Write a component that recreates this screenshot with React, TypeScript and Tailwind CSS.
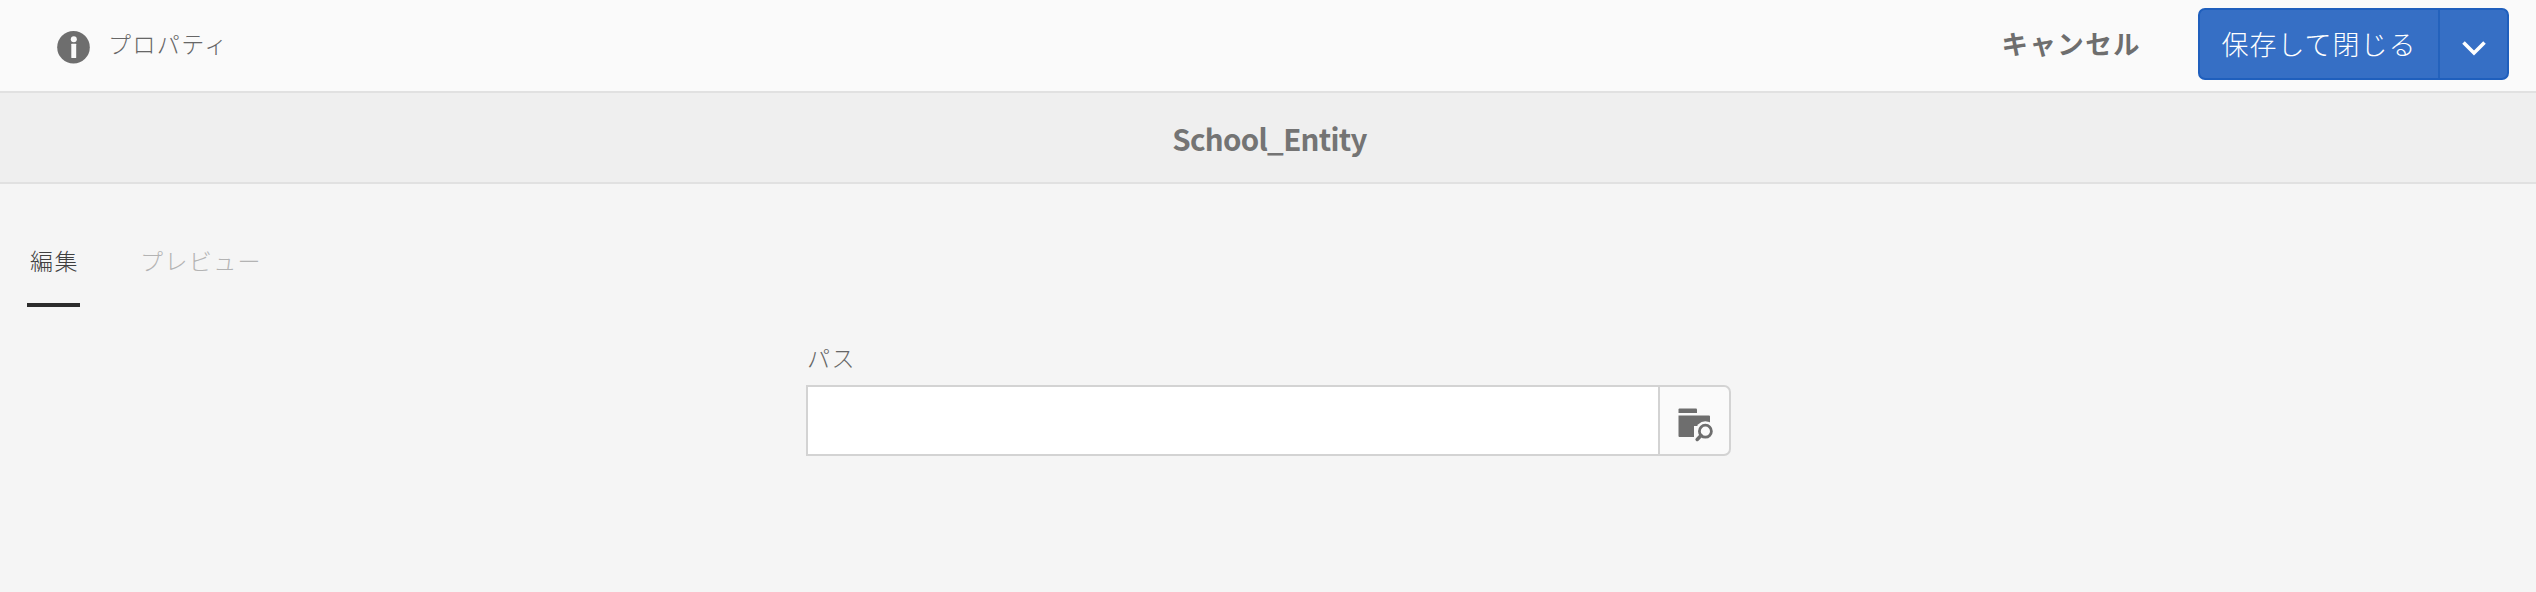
function InfoIcon() {
  return (
    <svg className="h-[33px] w-[33px] shrink-0" viewBox="0 0 33 33" aria-hidden="true">
      <circle cx="16.5" cy="16.3" r="16.3" fill="#6e6e6e" />
      <circle cx="16.8" cy="8.3" r="3" fill="#fafafa" />
      <rect x="14.3" y="12.8" width="4.9" height="14.2" rx="0.5" fill="#fafafa" />
    </svg>
  );
}

function ChevronIcon() {
  return (
    <svg className="h-[18px] w-[26px]" viewBox="0 0 26 18" fill="none" aria-hidden="true">
      <path d="M2.5 2.5 13 13 23.5 2.5" stroke="#ffffff" strokeWidth="3.6" />
    </svg>
  );
}

function FolderSearchIcon() {
  return (
    <svg className="h-[34px] w-[36px]" viewBox="0 0 36 34" aria-hidden="true">
      <path d="M.5 5V1.5Q.5 .5 1.5 .5H18Q19 .5 19 1.5V5Z" fill="#6e6e6e" />
      <path d="M.5 7.4H31Q32 7.4 32 8.4V18H16V29H1.5Q.5 29 .5 28Z" fill="#6e6e6e" />
      <circle cx="27.4" cy="23.2" r="10" fill="#fafafa" />
      <path d="M25 25.5 19.2 31.5" stroke="#fafafa" strokeWidth="6.5" />
      <circle cx="27.4" cy="23.2" r="6" fill="none" stroke="#6e6e6e" strokeWidth="2.8" />
      <path d="M23 27.6 19.2 31.4" stroke="#6e6e6e" strokeWidth="3.6" strokeLinecap="round" />
    </svg>
  );
}

export default function App() {
  return (
    <div className="h-[592px] w-full overflow-hidden bg-[#f5f5f5] font-['Noto_Sans_CJK_JP',sans-serif] font-light text-[#666666]">
      <header className="flex h-[93px] items-start justify-between border-b-2 border-[#e1e1e1] bg-[#fafafa] pr-[27px] pl-[57px]">
        <div className="flex pt-[31px]">
          <InfoIcon />
          <span className="-mt-[5px] ml-[18px] text-[23px] leading-[34px] tracking-[1.4px]">プロパティ</span>
        </div>
        <div className="flex pt-[8px]">
          <button className="mr-[57px] h-[71px] pb-[1px] text-[26.5px] leading-[70px] font-bold tracking-[1.4px] text-[#6e6e6e]">キャンセル</button>
          <div className="flex h-[72px] overflow-hidden rounded-[7px] border-2 border-[#1f5fbd] bg-[#366fc5] text-white">
            <button className="w-[240px] border-r-2 border-[#2462bc] pb-[1px] text-[27px] leading-[67px] tracking-[1px]">保存して閉じる</button>
            <button className="flex w-[67px] items-center justify-center pt-[9px]" aria-label="その他">
              <ChevronIcon />
            </button>
          </div>
        </div>
      </header>
      <div className="flex h-[91px] items-center justify-center border-b-2 border-[#e1e1e1] bg-[#efefef] pl-[3px]">
        <h1 className="text-[29.5px] leading-[40px] font-bold tracking-[-0.7px] text-[#747474]">School_Entity</h1>
      </div>
      <nav className="flex h-[123px] gap-[60px] pl-[27px]">
        <button className="flex h-[123px] w-[53px] justify-center border-b-4 border-[#2c2c2c] pt-[59px] text-[23px] leading-[34px] tracking-[1.4px] text-[#3f3f3f]">
          <span className="pl-[2px]">編集</span>
        </button>
        <button className="flex h-[123px] pt-[59px] text-[23px] leading-[34px] tracking-[1.4px] text-[#b3b3b3]">プレビュー</button>
      </nav>
      <main className="ml-[806px] w-[925px] pt-[33px]">
        <label htmlFor="path" className="block pl-[1px] text-[23px] leading-[34px] tracking-[1.4px]">パス</label>
        <div className="mt-[11px] flex h-[71px]">
          <input id="path" className="w-[852px] border-2 border-r-0 border-[#d3d3d3] bg-white outline-none" />
          <button className="flex flex-1 items-center justify-center rounded-r-[7px] border-2 border-[#d3d3d3] bg-[#fafafa] pt-[8px] pl-[2px]" aria-label="参照">
            <FolderSearchIcon />
          </button>
        </div>
      </main>
    </div>
  );
}
